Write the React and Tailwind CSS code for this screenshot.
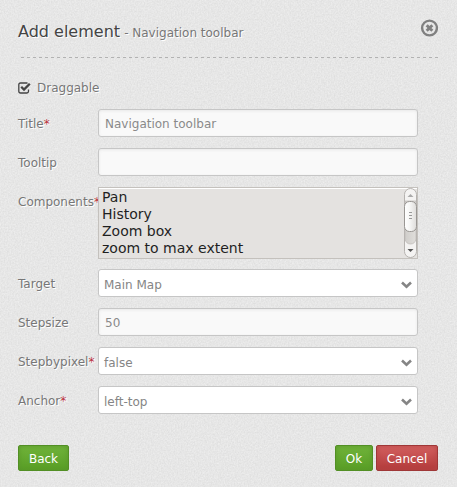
import React from "react";

const labelClass =
  "w-20 shrink-0 pt-[6px] text-xs leading-[18px] whitespace-nowrap text-[#777] [text-shadow:1px_1px_0_#fff]";

function Label({ text, required }) {
  return (
    <span className={labelClass}>
      {text}
      {required && <span className="text-[#b8303c]">*</span>}
    </span>
  );
}

function TextField({ label, value, required }) {
  return (
    <div className="mb-[11px] flex h-7">
      <Label text={label} required={required} />
      <div className="h-7 w-80 rounded-[3px] border border-[#c6c6c6] bg-[#f9f9f9] px-[6px] pt-[5px] text-xs leading-[18px] text-[#8a8a8a] shadow-[inset_0_1px_3px_#e8e8e8]">
        {value}
      </div>
    </div>
  );
}

function SelectField({ label, value, required }) {
  return (
    <div className="mb-[11px] flex h-7">
      <Label text={label} required={required} />
      <div className="flex h-7 w-80 items-start justify-between rounded-[3px] border border-[#c6c6c6] bg-white pr-[5px] pl-[5px] pt-[6px] text-xs leading-[18px] text-[#858585]">
        <span>{value}</span>
        <svg className="mt-[5px] h-[8px] w-[11px]" viewBox="0 0 11 8" fill="none" stroke="#858585" strokeWidth="2.600">
          <path d="M1 1.500 5.500 5.700 10 1.500" />
        </svg>
      </div>
    </div>
  );
}

function Scrollbar() {
  return (
    <svg className="h-[70px] w-[13px] shrink-0" viewBox="0 0 13 70">
      <defs>
        <linearGradient id="thumb">
          <stop offset="0" stopColor="#fff" />
          <stop offset="0.4" stopColor="#f7f7f6" />
          <stop offset="1" stopColor="#dedcda" />
        </linearGradient>
        <linearGradient id="track">
          <stop offset="0" stopColor="#cfcdca" />
          <stop offset="1" stopColor="#e0dedb" />
        </linearGradient>
      </defs>
      <rect x="0.5" y="0.5" width="12" height="69" rx="6" fill="#f4f3f2" stroke="#b5b2af" />
      <path d="M1 13h11v38q-1 5-5.500 5T1 51z" fill="url(#track)" stroke="#bbb8b5" strokeWidth=".7" />
      <rect x="0.5" y="13.500" width="12" height="30" rx="5" fill="url(#thumb)" stroke="#999693" />
      <path d="M5 24.500h3M5 27.500h3M5 30.500h3" stroke="#999" />
      <path d="m3.500 9 3-3 3 3z" fill="#aaa" />
      <path d="m3.500 61 3 3 3-3z" fill="#555" />
    </svg>
  );
}

function Button({ children, tone, className }) {
  const tones = {
    green:
      "border-[#528f24] bg-linear-to-b from-[#70b33a] to-[#589e25] shadow-[inset_0_0_5px_#59972a]",
    red: "border-[#9f3737] bg-linear-to-b from-[#d36060] to-[#b23a3a] shadow-[inset_0_0_5px_#b64646]",
  };
  return (
    <button
      className={`h-[26px] rounded-[2px] border pt-[2px] text-center text-xs leading-[22px] text-white ${tones[tone]} ${className}`}
    >
      {children}
    </button>
  );
}

function Grain() {
  return (
    <svg className="pointer-events-none absolute inset-0 h-full w-full" aria-hidden="true">
      <filter id="linen" x="0" y="0" width="100%" height="100%" colorInterpolationFilters="sRGB">
        <feTurbulence type="fractalNoise" baseFrequency="0.7 0.62" numOctaves="2" seed="4" />
        <feColorMatrix values="0.09 0 0 0 0.858  0.09 0 0 0 0.858  0.09 0 0 0 0.857  0 0 0 0 1" />
      </filter>
      <rect width="100%" height="100%" filter="url(#linen)" />
    </svg>
  );
}

export default function App() {
  return (
    <div className="relative h-[487px] w-[457px] overflow-hidden bg-[#e6e6e5] font-['DejaVu_Sans',sans-serif]">
      <Grain />
      <div className="relative flex h-full flex-col pr-[19px] pl-[18px]">
        <header className="flex h-[57px] items-start justify-between pt-[19px]">
          <h1 className="pt-px text-base leading-6 text-[#444] [text-shadow:1px_1px_0_#fff]">
            Add element <span className="-ml-px text-xs text-[#777]">- Navigation toolbar</span>
          </h1>
          <svg className="h-[18px] w-[18px]" viewBox="0 0 18 18" fill="none" stroke="#808080">
            <circle cx="9.500" cy="9" r="7.400" strokeWidth="2.400" />
            <path d="m6.700 6.200 5.600 5.600m0-5.600-5.600 5.600" strokeWidth="2.900" />
          </svg>
        </header>
        <div className="ml-[3px] h-px bg-[repeating-linear-gradient(90deg,#b2b2b2_0_3px,transparent_3px_6px)]" />
        <div className="flex h-[51px] items-start pt-[21px] text-xs leading-[18px] text-[#777]">
          <svg className="mt-[3px] mr-[6px] h-[13px] w-[13px]" viewBox="0 0 13 13" fill="none" stroke="#444">
            <path d="M10.500 7.500v1.800q0 1.700-1.700 1.700H2.500Q.8 11 .8 9.300V2.700Q.8 1 2.500 1H9.500" strokeWidth="1.300" />
            <path d="M3.200 4.800 6 7.600l5.800-5.800" strokeWidth="2.300" />
          </svg>
          <span className="[text-shadow:1px_1px_0_#fff]">Draggable</span>
        </div>
        <TextField label="Title" value="Navigation toolbar" required />
        <TextField label="Tooltip" value="" />
        <div className="mb-[10px] flex h-[72px]">
          <Label text="Components" required />
          <div className="flex w-80 justify-between border border-[#c4c1bd] bg-[#e4e2e0] shadow-[inset_0_1px_0_#fff]">
            <div className="pt-px pl-[3px] text-sm leading-[17px] text-[#1f1f1f]">
              <div>Pan</div>
              <div>History</div>
              <div>Zoom box</div>
              <div>zoom to max extent</div>
            </div>
            <Scrollbar />
          </div>
        </div>
        <SelectField label="Target" value="Main Map" />
        <TextField label="Stepsize" value="50" />
        <SelectField label="Stepbypixel" value="false" required />
        <SelectField label="Anchor" value="left-top" required />
        <footer className="mt-5 flex justify-between">
          <Button tone="green" className="w-[51px]">Back</Button>
          <div className="flex gap-[3px]">
            <Button tone="green" className="w-[38px]">Ok</Button>
            <Button tone="red" className="w-[62px]">Cancel</Button>
          </div>
        </footer>
      </div>
    </div>
  );
}
